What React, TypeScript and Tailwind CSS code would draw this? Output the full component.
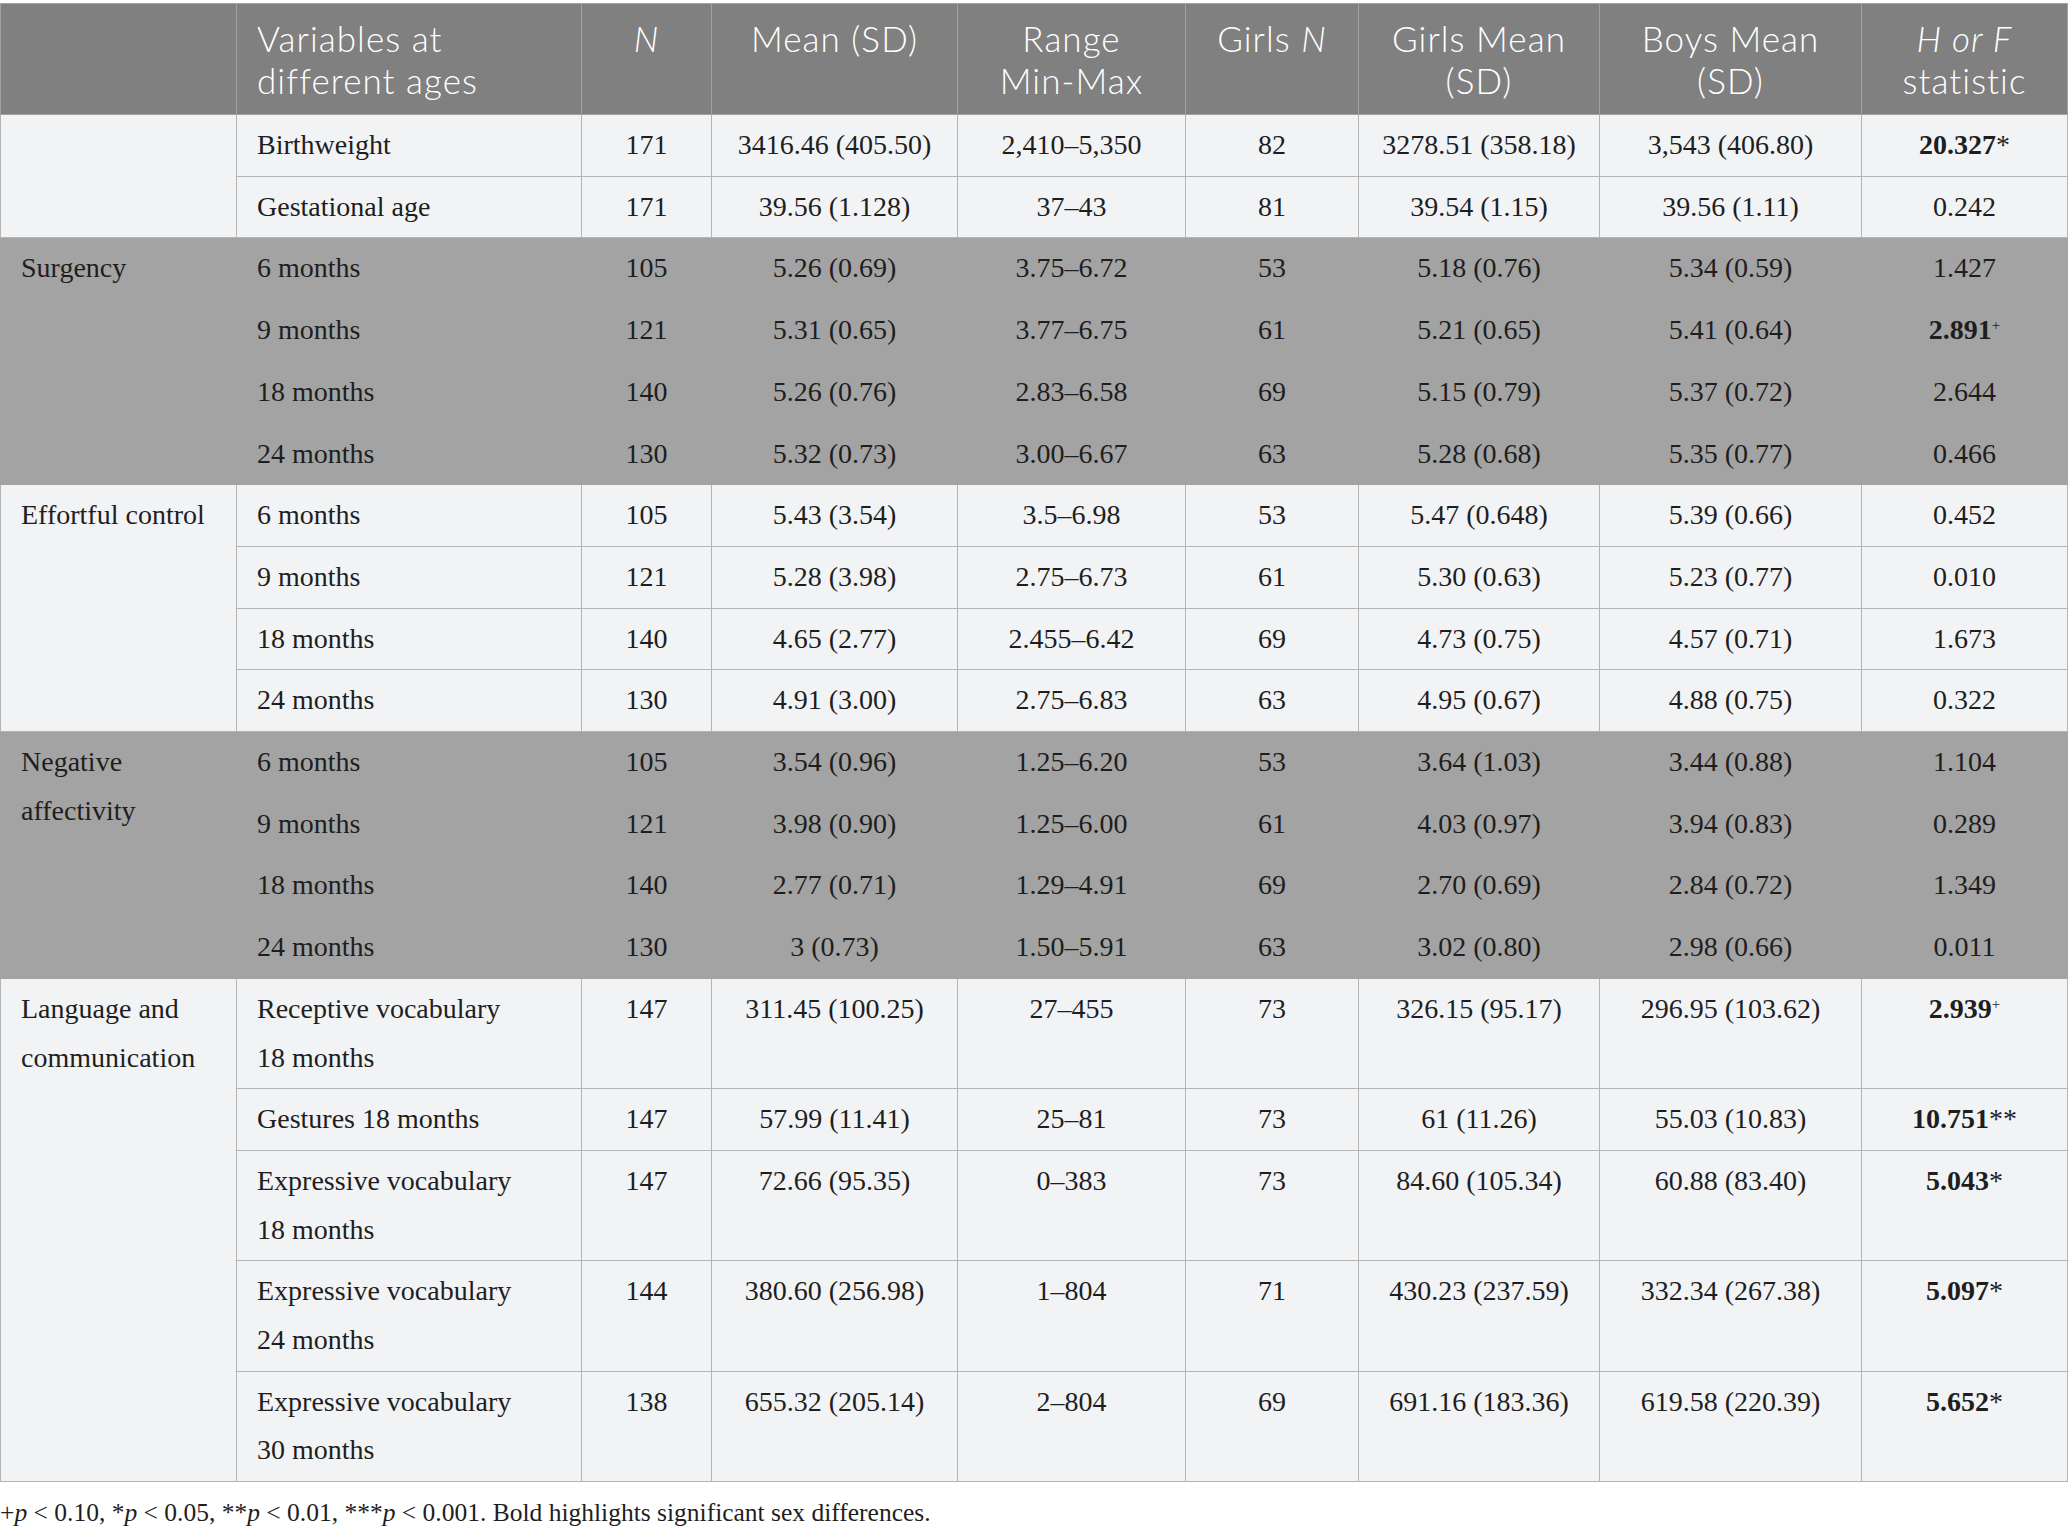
import type { ReactNode } from "react";

type Row = {
  v: ReactNode;
  n: string;
  mean: string;
  range: string;
  gn: string;
  gm: string;
  bm: string;
  stat: ReactNode;
};

type Group = { name?: ReactNode; dark?: boolean; rows: Row[] };

// bold value followed by a plain star mark
const sig = (value: string, mark: string) => (
  <>
    <span className="font-bold">{value}</span>
    {mark}
  </>
);

// bold value with a small raised plus
const trend = (value: string) => (
  <>
    <span className="font-bold">{value}</span>
    <span className="relative -top-[9px] text-[15px] leading-none">+</span>
  </>
);

const groups: Group[] = [
  {
    rows: [
      { v: "Birthweight", n: "171", mean: "3416.46 (405.50)", range: "2,410–5,350", gn: "82", gm: "3278.51 (358.18)", bm: "3,543 (406.80)", stat: sig("20.327", "*") },
      { v: "Gestational age", n: "171", mean: "39.56 (1.128)", range: "37–43", gn: "81", gm: "39.54 (1.15)", bm: "39.56 (1.11)", stat: "0.242" },
    ],
  },
  {
    name: "Surgency",
    dark: true,
    rows: [
      { v: "6 months", n: "105", mean: "5.26 (0.69)", range: "3.75–6.72", gn: "53", gm: "5.18 (0.76)", bm: "5.34 (0.59)", stat: "1.427" },
      { v: "9 months", n: "121", mean: "5.31 (0.65)", range: "3.77–6.75", gn: "61", gm: "5.21 (0.65)", bm: "5.41 (0.64)", stat: trend("2.891") },
      { v: "18 months", n: "140", mean: "5.26 (0.76)", range: "2.83–6.58", gn: "69", gm: "5.15 (0.79)", bm: "5.37 (0.72)", stat: "2.644" },
      { v: "24 months", n: "130", mean: "5.32 (0.73)", range: "3.00–6.67", gn: "63", gm: "5.28 (0.68)", bm: "5.35 (0.77)", stat: "0.466" },
    ],
  },
  {
    name: "Effortful control",
    rows: [
      { v: "6 months", n: "105", mean: "5.43 (3.54)", range: "3.5–6.98", gn: "53", gm: "5.47 (0.648)", bm: "5.39 (0.66)", stat: "0.452" },
      { v: "9 months", n: "121", mean: "5.28 (3.98)", range: "2.75–6.73", gn: "61", gm: "5.30 (0.63)", bm: "5.23 (0.77)", stat: "0.010" },
      { v: "18 months", n: "140", mean: "4.65 (2.77)", range: "2.455–6.42", gn: "69", gm: "4.73 (0.75)", bm: "4.57 (0.71)", stat: "1.673" },
      { v: "24 months", n: "130", mean: "4.91 (3.00)", range: "2.75–6.83", gn: "63", gm: "4.95 (0.67)", bm: "4.88 (0.75)", stat: "0.322" },
    ],
  },
  {
    name: (
      <>
        Negative
        <br />
        affectivity
      </>
    ),
    dark: true,
    rows: [
      { v: "6 months", n: "105", mean: "3.54 (0.96)", range: "1.25–6.20", gn: "53", gm: "3.64 (1.03)", bm: "3.44 (0.88)", stat: "1.104" },
      { v: "9 months", n: "121", mean: "3.98 (0.90)", range: "1.25–6.00", gn: "61", gm: "4.03 (0.97)", bm: "3.94 (0.83)", stat: "0.289" },
      { v: "18 months", n: "140", mean: "2.77 (0.71)", range: "1.29–4.91", gn: "69", gm: "2.70 (0.69)", bm: "2.84 (0.72)", stat: "1.349" },
      { v: "24 months", n: "130", mean: "3 (0.73)", range: "1.50–5.91", gn: "63", gm: "3.02 (0.80)", bm: "2.98 (0.66)", stat: "0.011" },
    ],
  },
  {
    name: (
      <>
        Language and
        <br />
        communication
      </>
    ),
    rows: [
      { v: <>Receptive vocabulary<br />18 months</>, n: "147", mean: "311.45 (100.25)", range: "27–455", gn: "73", gm: "326.15 (95.17)", bm: "296.95 (103.62)", stat: trend("2.939") },
      { v: "Gestures 18 months", n: "147", mean: "57.99 (11.41)", range: "25–81", gn: "73", gm: "61 (11.26)", bm: "55.03 (10.83)", stat: sig("10.751", "**") },
      { v: <>Expressive vocabulary<br />18 months</>, n: "147", mean: "72.66 (95.35)", range: "0–383", gn: "73", gm: "84.60 (105.34)", bm: "60.88 (83.40)", stat: sig("5.043", "*") },
      { v: <>Expressive vocabulary<br />24 months</>, n: "144", mean: "380.60 (256.98)", range: "1–804", gn: "71", gm: "430.23 (237.59)", bm: "332.34 (267.38)", stat: sig("5.097", "*") },
      { v: <>Expressive vocabulary<br />30 months</>, n: "138", mean: "655.32 (205.14)", range: "2–804", gn: "69", gm: "691.16 (183.36)", bm: "619.58 (220.39)", stat: sig("5.652", "*") },
    ],
  },
];

const th =
  "h-[111px] align-top pt-[13px] px-3 text-[35px] leading-[42px] tracking-[0.03em] font-light text-white border border-[#a1a1a1]";

export default function App() {
  return (
    <div className="min-h-screen bg-white pt-[3px] font-['Liberation_Serif',serif] text-[#1e1e1e]">
      <table className="w-[2067px] table-fixed border-collapse border-t border-[#c8c8c8]">
        <colgroup>
          <col className="w-[236px]" />
          <col className="w-[345px]" />
          <col className="w-[130px]" />
          <col className="w-[246px]" />
          <col className="w-[228px]" />
          <col className="w-[173px]" />
          <col className="w-[241px]" />
          <col className="w-[262px]" />
          <col className="w-[206px]" />
        </colgroup>
        <thead className="bg-[#7f807f] font-['Lato',sans-serif]">
          <tr>
            <th className={th}></th>
            <th className={`${th} text-left pl-5`}>
              Variables at
              <br />
              different ages
            </th>
            <th className={th}>
              <i>N</i>
            </th>
            <th className={th}>Mean (SD)</th>
            <th className={th}>
              Range
              <br />
              Min-Max
            </th>
            <th className={th}>
              Girls <i>N</i>
            </th>
            <th className={th}>
              Girls Mean
              <br />
              (SD)
            </th>
            <th className={th}>
              Boys Mean
              <br />
              (SD)
            </th>
            <th className={th}>
              <i>H or F</i>
              <br />
              statistic
            </th>
          </tr>
        </thead>
        <tbody className="text-[28px] leading-[48.7px]">
          {groups.map((g, gi) => {
            const tone = g.dark
              ? "bg-[#a3a3a3] border-[#a3a3a3]"
              : "bg-[#f2f3f5] border-[#b4b4b4]";
            const td = `border py-[6px] align-top ${tone}`;
            return g.rows.map((r, ri) => (
              <tr key={`${gi}-${ri}`}>
                {ri === 0 && (
                  <td rowSpan={g.rows.length} className={`${td} pl-5 pr-2 text-left`}>
                    {g.name}
                  </td>
                )}
                <td className={`${td} px-5 text-left`}>{r.v}</td>
                <td className={`${td} text-center`}>{r.n}</td>
                <td className={`${td} text-center`}>{r.mean}</td>
                <td className={`${td} text-center`}>{r.range}</td>
                <td className={`${td} text-center`}>{r.gn}</td>
                <td className={`${td} text-center`}>{r.gm}</td>
                <td className={`${td} text-center`}>{r.bm}</td>
                <td className={`${td} text-center`}>{r.stat}</td>
              </tr>
            ));
          })}
        </tbody>
      </table>
      <p className="pt-[14px] text-[25.5px] leading-[34px]">
        +<i>p</i> &lt; 0.10, *<i>p</i> &lt; 0.05, **<i>p</i> &lt; 0.01, ***<i>p</i> &lt; 0.001. Bold
        highlights significant sex differences.
      </p>
    </div>
  );
}
